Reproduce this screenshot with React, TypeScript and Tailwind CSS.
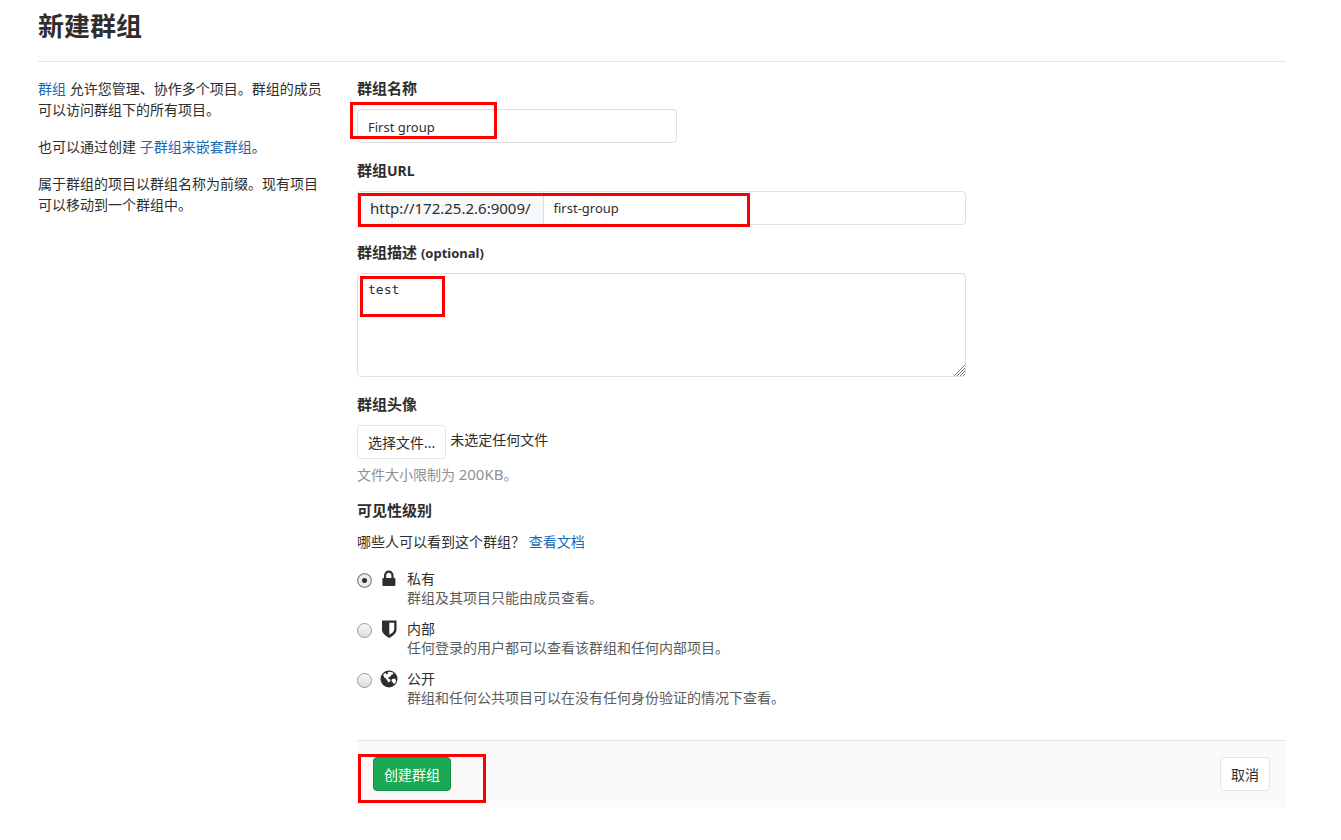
import type { ReactNode } from "react";

const LockIcon = () => (
    <svg viewBox="0 0 18 18" className="size-[18px]" fill="currentColor">
        <path
            fillRule="evenodd"
            d="M4 8V5.500C4.200 2.600 6 .5 8.800.5s4.600 2.100 4.800 5V8h.9c.5 0 .9.4.9.900v6.200c0 .5-.4.900-.9.900H3.300c-.5 0-.9-.4-.9-.900V8.900c0-.5.4-.9.9-.9H4zm2.200 0h5.200V5.800c0-1.900-1-3.100-2.600-3.100S6.200 3.900 6.200 5.800V8z"
        />
    </svg>
);

const ShieldIcon = () => (
    <svg viewBox="0 0 18 18" className="size-[18px]" fill="currentColor">
        <path fillRule="evenodd" d="M2 .5h14.500v9c0 3.500-2.700 5.900-7.200 8.400C4.700 15.400 2 13 2 9.500v-9zm7.300 2.200v12c3-1.700 4.900-3.200 4.900-5.500V2.700H9.300z" />
    </svg>
);

const EarthIcon = () => (
    <svg viewBox="0 0 18 18" className="size-[18px]">
        <circle cx="9" cy="9" r="8.500" fill="currentColor" />
        <path fill="#fff" d="M3.200 4.200L5.200 3l1.600 1.200 1.400-.6L7.600 2.300 9.500 1.800l3.500.8.4 1.400-1.800.8-1.200 1.600-1.600.6-.4 1.600 2.200 1.200-.6 1.600-1.500 1.200L7.600 11 5.800 8.400 4 7.200z" />
        <path fill="#fff" d="M11.800 9.200l2.400-.8 1.800 1.400-.4 2.600-1.600 1.800-1-1.800-1.400-1z" />
    </svg>
);

interface LevelProps {
    id: string;
    title: string;
    description: string;
    icon: ReactNode;
    checked?: boolean;
}

const levels: LevelProps[] = [
    { id: "private", title: "私有", description: "群组及其项目只能由成员查看。", icon: <LockIcon />, checked: true },
    { id: "internal", title: "内部", description: "任何登录的用户都可以查看该群组和任何内部项目。", icon: <ShieldIcon /> },
    { id: "public", title: "公开", description: "群组和任何公共项目可以在没有任何身份验证的情况下查看。", icon: <EarthIcon /> },
];

function Level({ id, title, description, icon, checked }: LevelProps) {
    return (
        <div className="flex items-start leading-[19px]">
            <input
                type="radio"
                name="visibility"
                id={id}
                defaultChecked={checked}
                className="mt-1 size-[15px] shrink-0 appearance-none rounded-full border border-[#999] bg-linear-to-b from-[#f6f6f6] to-[#dedede] checked:bg-none checked:bg-[#2e2e2e] checked:shadow-[inset_0_0_0_4px_#ececec]"
            />
            <label htmlFor={id} className="ml-2 flex gap-[9px]">
                <span className="mt-px text-[#2e2e2e]">{icon}</span>
                <span>
                    <span className="block">{title}</span>
                    <span className="block text-[#5c5c5c]">{description}</span>
                </span>
            </label>
        </div>
    );
}

// red outline that marks a step of the walkthrough
function Mark({ className }: { className: string }) {
    return <span aria-hidden="true" className={`pointer-events-none absolute border-[3px] border-[#fe0000] ${className}`} />;
}

export default function App() {
    return (
        <main className="bg-white pr-[55px] pl-[38px] font-['Noto_Sans','Noto_Sans_CJK_SC',sans-serif] text-sm leading-[21px] text-[#2e2e2e]">
            <h1 className="border-b border-[#e5e5e5] pt-2 pb-[17px] text-[26px] leading-9 font-bold">新建群组</h1>
            <div className="flex gap-8 pt-4">
                <aside className="flex w-[287px] shrink-0 flex-col gap-4">
                    <p>
                        <a href="#groups" className="text-[#1b69b6]">群组</a> 允许您管理、协作多个项目。群组的成员可以访问群组下的所有项目。
                    </p>
                    <p>
                        也可以通过创建 <a href="#subgroups" className="text-[#1b69b6]">子群组来嵌套群组</a>。
                    </p>
                    <p>属于群组的项目以群组名称为前缀。现有项目可以移动到一个群组中。</p>
                </aside>
                <form className="min-w-0 flex-1">
                    <div className="flex max-w-[609px] flex-col gap-[17px]">
                        <div className="flex flex-col gap-[10px]">
                            <label htmlFor="name" className="h-[21px] text-[15px] font-bold">群组名称</label>
                            <div className="relative flex">
                                <input id="name" defaultValue="First group" className="h-[34px] w-80 rounded border border-[#dfdfdf] px-[10px] pt-[2px] text-[13px]" />
                                <Mark className="-top-[7px] -left-[7px] h-[37px] w-[147px]" />
                            </div>
                        </div>
                        <div className="flex flex-col gap-[10px]">
                            <label htmlFor="path" className="h-[21px] text-[15px] font-bold">群组<span className="text-sm">URL</span></label>
                            <div className="relative flex h-[34px]">
                                <span className="flex items-center rounded-l border border-r-0 border-[#dfdfdf] bg-[#f7f8fa] px-3 text-[15px]">http://172.25.2.6:9009/</span>
                                <input id="path" defaultValue="first-group" className="min-w-0 flex-1 rounded-r border border-[#dfdfdf] px-[10px] text-[13px]" />
                                <Mark className="top-[2px] left-px h-[34px] w-[392px]" />
                            </div>
                        </div>
                        <div className="flex flex-col gap-[10px]">
                            <label htmlFor="description" className="h-[21px] text-[15px] font-bold">群组描述 <span className="text-[13px]">(optional)</span></label>
                            <div className="relative flex">
                                <textarea
                                    id="description"
                                    defaultValue="test"
                                    className="h-[104px] w-full resize-y rounded border border-[#dfdfdf] px-[10px] py-[6px] font-['DejaVu_Sans_Mono',monospace] text-[13px] leading-5"
                                />
                                <Mark className="top-[3px] left-[3px] h-[41px] w-[85px]" />
                                <svg viewBox="0 0 12 12" aria-hidden="true" className="pointer-events-none absolute right-px bottom-px size-3 bg-white" fill="none" stroke="#777">
                                    <path d="M1 12L12 1M4 12L12 4M7 12L12 7M10 12L12 10" />
                                </svg>
                            </div>
                        </div>
                    </div>
                    <div className="mt-[17px] text-[15px] font-bold">群组头像</div>
                    <div className="mt-[10px] flex items-start gap-1">
                        <button type="button" className="h-[34px] rounded border border-[#e5e5e5] px-[10px]">选择文件...</button>
                        <span className="pt-1">未选定任何文件</span>
                    </div>
                    <p className="mt-[5px] h-[21px] text-[#919191]">文件大小限制为 <span className="text-[15px]">200KB</span>。</p>
                    <h2 className="mt-[15px] text-[15px] font-bold">可见性级别</h2>
                    <p className="mt-[10px]">
                        哪些人可以看到这个群组？ <a href="#docs" className="text-[#1b69b6]">查看文档</a>
                    </p>
                    <div className="mt-[17px] flex flex-col gap-3">
                        {levels.map((level) => (
                            <Level key={level.id} {...level} />
                        ))}
                    </div>
                    <div className="relative mt-[33px] flex justify-between border-t border-[#e5e5e5] bg-[#fafafa] p-4">
                        <button type="submit" className="h-[34px] rounded border border-[#168f48] bg-[#1aaa55] px-[10px] text-white">创建群组</button>
                        <button type="button" className="h-[34px] rounded border border-[#e5e5e5] bg-white px-[10px]">取消</button>
                        <Mark className="top-[13px] left-px h-[49px] w-32" />
                    </div>
                </form>
            </div>
        </main>
    );
}
